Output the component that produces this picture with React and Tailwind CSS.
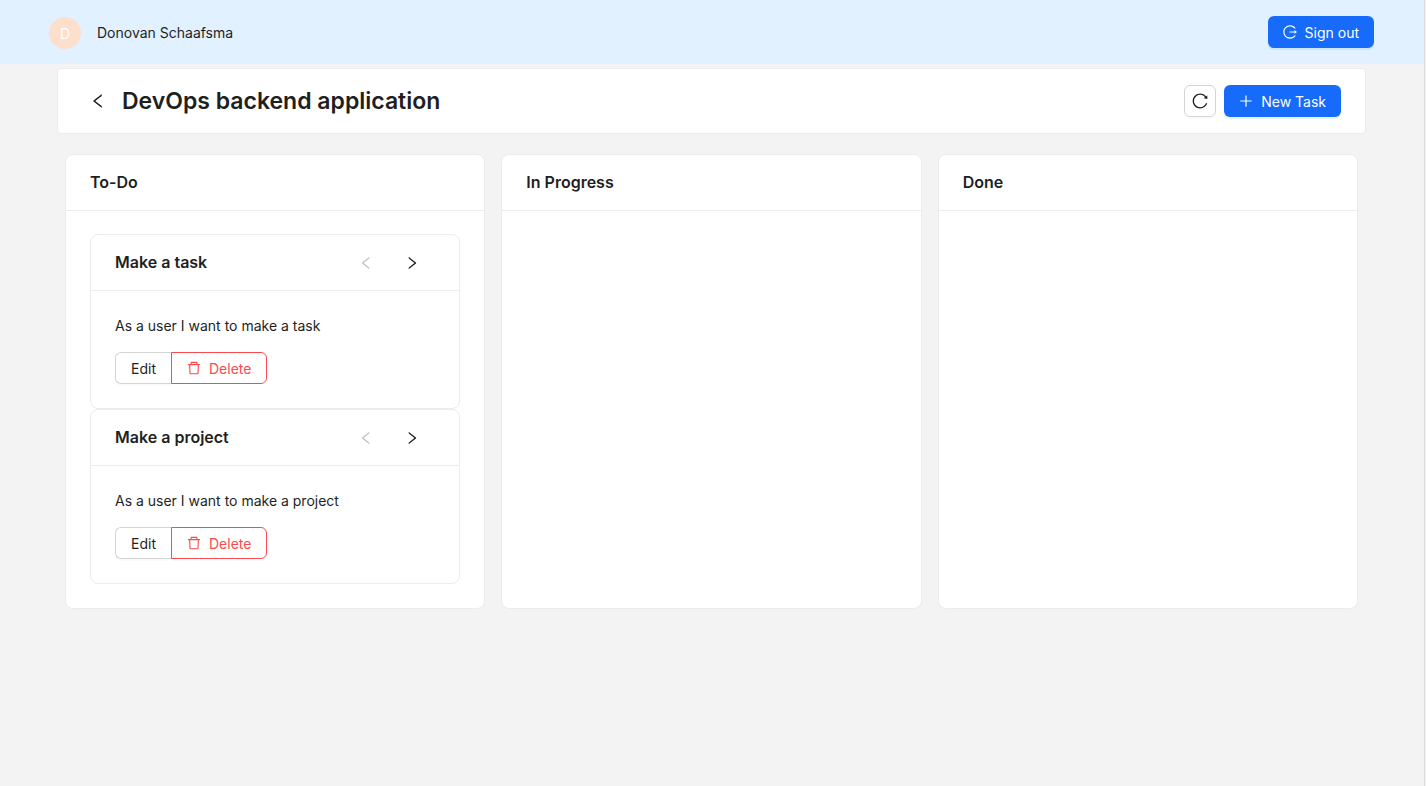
import {
  AiOutlineDelete,
  AiOutlineLeft,
  AiOutlineLogout,
  AiOutlinePlus,
  AiOutlineReload,
  AiOutlineRight,
} from "react-icons/ai";

// Trims the built-in margin of the 1024-unit icon grid.
const ICON_BOX = "64 64 896 896";

const columns = [
  {
    title: "To-Do",
    tasks: [
      { title: "Make a task", description: "As a user I want to make a task" },
      { title: "Make a project", description: "As a user I want to make a project" },
    ],
  },
  { title: "In Progress", tasks: [] },
  { title: "Done", tasks: [] },
];

function Label({ children }) {
  return <span className="pt-0.5">{children}</span>;
}

function PrimaryButton({ icon: Icon, children }) {
  return (
    <button
      type="button"
      className="flex h-8 items-center gap-2 rounded-md bg-[#176bfb] px-[15px] text-white shadow-[0_2px_0_rgba(5,145,255,0.1)]"
    >
      <Icon size={14} viewBox={ICON_BOX} />
      <Label>{children}</Label>
    </button>
  );
}

function TaskCard({ title, description }) {
  return (
    <article className="rounded-lg border border-[#ececec] bg-white">
      <header className="flex h-14 items-center justify-between border-b border-[#ececec] px-6">
        <h3 className="pb-0.5 text-base font-semibold">{title}</h3>
        <div className="flex">
          <button
            type="button"
            disabled
            aria-label="Move back"
            className="flex h-8 w-[46px] items-center justify-center text-black/25"
          >
            <AiOutlineLeft size={14} viewBox={ICON_BOX} />
          </button>
          <button
            type="button"
            aria-label="Move forward"
            className="flex h-8 w-[46px] items-center justify-center"
          >
            <AiOutlineRight size={14} viewBox={ICON_BOX} />
          </button>
        </div>
      </header>
      <div className="p-6">
        <p className="mb-[15px] leading-[22px]">{description}</p>
        <div className="flex">
          <button
            type="button"
            className="flex h-8 items-center rounded-l-md border border-r-0 border-[#d4d4d4] px-[15px] shadow-[0_2px_0_rgba(0,0,0,0.02)]"
          >
            <Label>Edit</Label>
          </button>
          <button
            type="button"
            className="flex h-8 items-center gap-2 rounded-r-md border border-[#fb4a4e] px-[15px] text-[#fb4a4e]"
          >
            <AiOutlineDelete size={14} viewBox={ICON_BOX} />
            <Label>Delete</Label>
          </button>
        </div>
      </div>
    </article>
  );
}

export default function App() {
  return (
    <div className="min-h-screen bg-[#f3f3f3] pr-px font-['Inter','Liberation_Sans',sans-serif] text-sm text-[#1f1f1f]">
      <div className="min-h-screen border-r border-[#dedede]">
        <header className="flex h-16 items-center justify-between bg-[#e1f1ff] pr-[50px] pl-[49px]">
          <div className="flex items-center gap-4 pt-0.5">
            <span className="flex size-8 items-center justify-center rounded-full bg-[#fddfcb] text-white">
              <Label>D</Label>
            </span>
            <span>Donovan Schaafsma</span>
          </div>
          <PrimaryButton icon={AiOutlineLogout}>Sign out</PrimaryButton>
        </header>
        <main className="pt-1 pr-[58px] pl-[57px]">
          <div className="flex items-center justify-between rounded-sm border border-[#ececec] bg-white px-6 py-4">
            <div className="flex items-center gap-2">
              <button
                type="button"
                aria-label="Back"
                className="flex size-8 items-center justify-center"
              >
                <AiOutlineLeft size={16} viewBox={ICON_BOX} />
              </button>
              <h1 className="text-[23px] leading-8 font-semibold">DevOps backend application</h1>
            </div>
            <div className="flex items-center gap-2">
              <button
                type="button"
                aria-label="Refresh"
                className="flex size-8 items-center justify-center rounded-md border border-[#d4d4d4] shadow-[0_2px_0_rgba(0,0,0,0.02)]"
              >
                <AiOutlineReload size={16} viewBox={ICON_BOX} />
              </button>
              <PrimaryButton icon={AiOutlinePlus}>New Task</PrimaryButton>
            </div>
          </div>
          <div className="mt-5 grid grid-cols-3 gap-4 px-2">
            {columns.map((column) => (
              <section key={column.title} className="rounded-lg border border-[#ececec] bg-white">
                <h2 className="flex h-14 items-center border-b border-[#ececec] px-6 pb-0.5 text-base font-semibold">
                  {column.title}
                </h2>
                <div className="p-6 pt-[23px]">
                  {column.tasks.map((task) => (
                    <TaskCard key={task.title} {...task} />
                  ))}
                </div>
              </section>
            ))}
          </div>
        </main>
      </div>
    </div>
  );
}
